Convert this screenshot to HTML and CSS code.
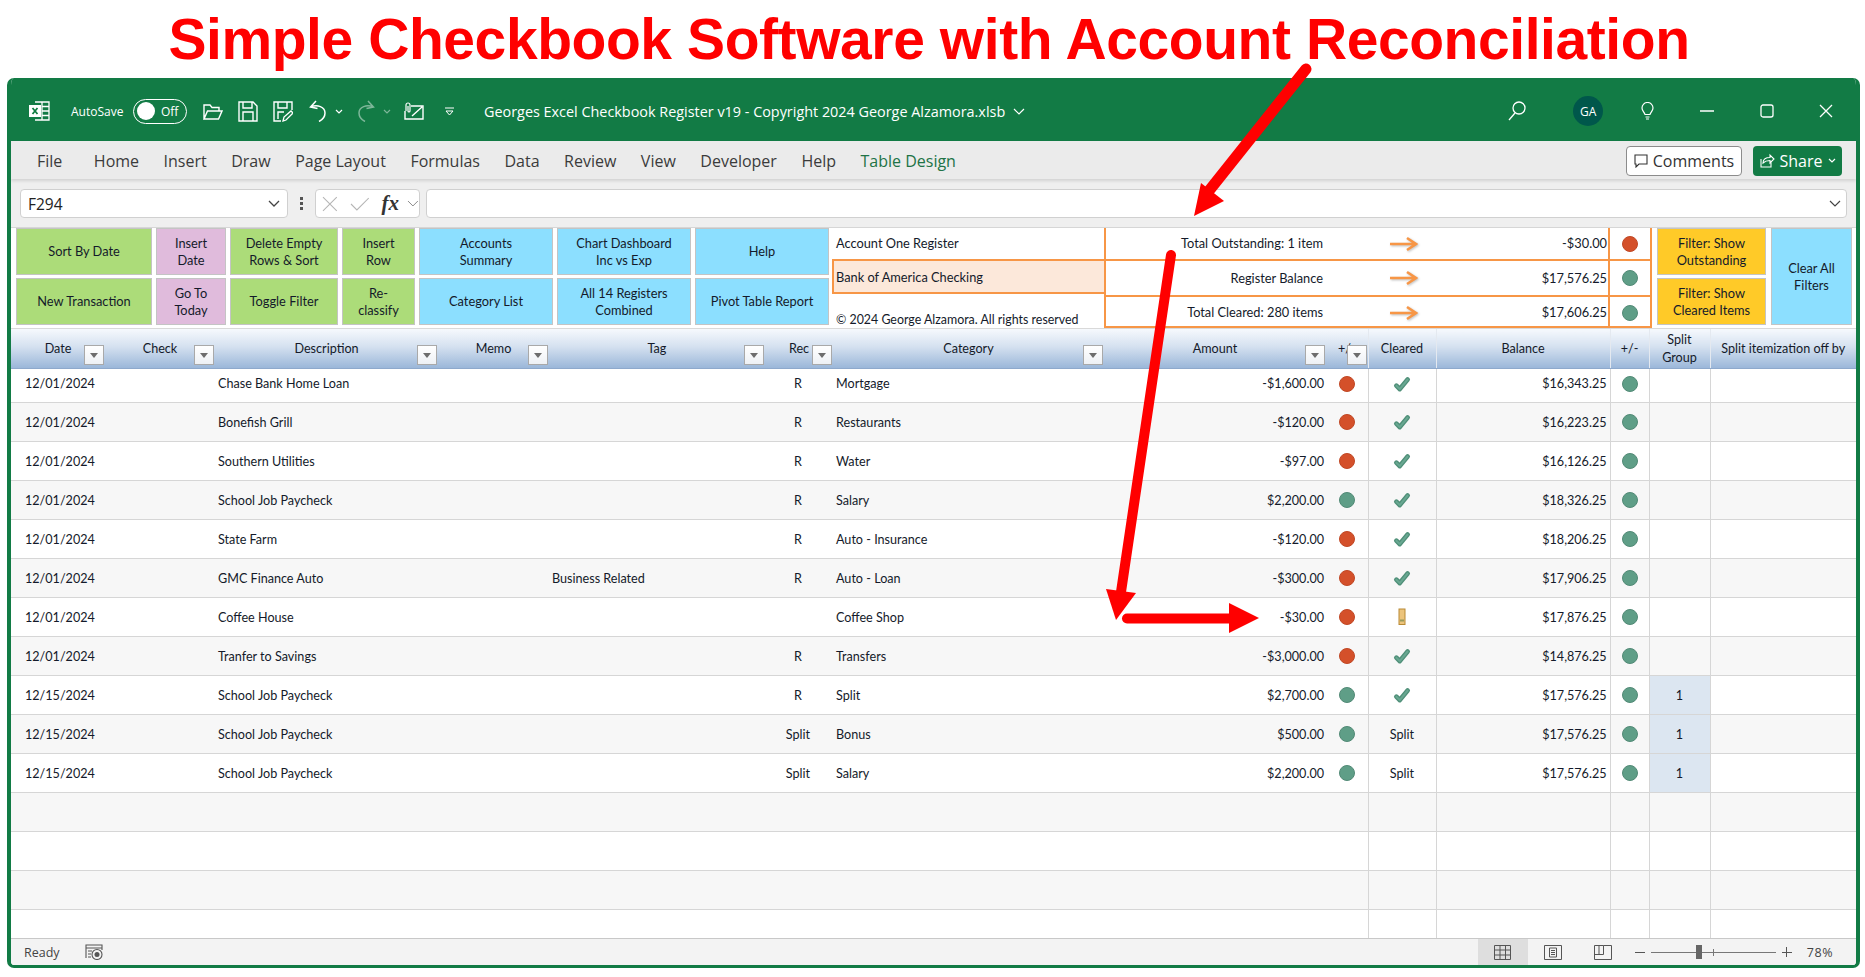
FILE: index.html
```html
<!DOCTYPE html>
<html lang="en">
<head>
  <meta charset="UTF-8">
  <title>Simple Checkbook Software with Account Reconciliation</title>
  <link rel="stylesheet" href="styles.css">
</head>
<body>

  <svg class="defs" width="0" height="0">
    <symbol id="check" viewBox="0 0 16 16">
      <path d="M3 9.500L6 12.500L13 4" fill="none" stroke="#4f8f78" stroke-width="4.200" stroke-linecap="round" stroke-linejoin="round"/>
      <path d="M3 9.500L6 12.500L13 4" fill="none" stroke="#68a791" stroke-width="1.800" stroke-linecap="round" stroke-linejoin="round"/>
    </symbol>
    <symbol id="warn" viewBox="0 0 16 18">
      <rect x="5" y="1" width="6" height="15.500" fill="#ecc47c" stroke="#b98a35" stroke-width="1"/>
      <rect x="6" y="11.500" width="4" height="2" fill="#9a9a5a"/>
    </symbol>
    <symbol id="orange-arrow" viewBox="0 0 29 16">
      <path d="M1 8h26M18 2l9 6-9 6" fill="none" stroke="#f79646" stroke-width="2.600"/>
    </symbol>
  </svg>

  <h1 class="headline">Simple Checkbook Software with Account Reconciliation</h1>

  <div class="window">
    <header class="titlebar">
      <svg class="ico excel" viewBox="0 0 21 20" width="21" height="20">
        <path d="M6 1h14v18H6M13 1v18M13 5.500h7M13 10h7M13 14.500h7" fill="none" stroke="#fff" stroke-width="1.300"/>
        <rect y="4" width="12" height="12" fill="#fff"/>
        <path d="M3.500 7l5 6M8.500 7l-5 6" stroke="#107c41" stroke-width="1.800"/>
      </svg>
      <span class="autosave">AutoSave</span>
      <span class="toggle"><i></i>Off</span>
      <svg class="ico folder" viewBox="0 0 20 17" width="20" height="17">
        <path d="M1 16V2h6l2 2.500h7V8M1 16l3.500-8H19l-3.500 8z" fill="none" stroke="#fff" stroke-width="1.400"/>
      </svg>
      <svg class="ico save" viewBox="0 0 20 21" width="20" height="21">
        <path d="M1 1h14l4 4v15H1zM5 1v6h9V1M5 20v-9h10v9" fill="none" stroke="#fff" stroke-width="1.400"/>
      </svg>
      <svg class="ico saveas" viewBox="0 0 20 21" width="20" height="21">
        <path d="M8 20H1V1h18v8M5 1v6h9V1M5 18v-7h6" fill="none" stroke="#fff" stroke-width="1.400"/>
        <path d="M10 20l1-4 7-6 2 2-7 7z" fill="none" stroke="#fff" stroke-width="1.300"/>
      </svg>
      <svg class="ico undo" viewBox="0 0 18 22" width="18" height="22">
        <path d="M7 1L1.500 7l7 1.500M1.500 7c7-3 14.500 0 14.500 6 0 4-3 7-6 8.500" fill="none" stroke="#fff" stroke-width="1.500"/>
      </svg>
      <svg class="chev-sm" viewBox="0 0 8 5" width="8" height="5"><path d="M1 1l3 3 3-3" fill="none" stroke="#fff" stroke-width="1.200"/></svg>
      <svg class="ico redo" viewBox="0 0 18 22" width="18" height="22">
        <path d="M11 1l5.500 6-7 1.500M16.500 7c-7-3-14.500 0-14.500 6 0 4 3 7 6 8.500" fill="none" stroke="#fff" stroke-width="1.500"/>
      </svg>
      <svg class="chev-sm dim" viewBox="0 0 8 5" width="8" height="5"><path d="M1 1l3 3 3-3" fill="none" stroke="#fff" stroke-width="1.200"/></svg>
      <svg class="ico mail" viewBox="0 0 20 18" width="20" height="18">
        <path d="M7 4h12v13H1V9M8 14l10-9" fill="none" stroke="#fff" stroke-width="1.400"/>
        <path d="M2 9V3a2 2 0 0 1 4 0v6a1 1 0 0 1-2 0V4" fill="none" stroke="#fff" stroke-width="1.200"/>
      </svg>
      <svg class="ico customize" viewBox="0 0 9 9" width="9" height="9">
        <path d="M0 1h9" stroke="#fff" stroke-width="1.100"/><path d="M1 4l3.500 4L8 4z" fill="none" stroke="#fff"/>
      </svg>
      <span class="doc-name">Georges Excel Checkbook Register v19 - Copyright 2024 George Alzamora.xlsb</span>
      <svg class="doc-chev" viewBox="0 0 12 7" width="12" height="7"><path d="M1 1l5 5 5-5" fill="none" stroke="#fff" stroke-width="1.200"/></svg>

      <div class="win-controls">
        <span class="slot search-slot">
          <svg viewBox="0 0 18 20" width="18" height="20"><circle cx="11" cy="7" r="6" fill="none" stroke="#fff" stroke-width="1.300"/><path d="M7 12l-6 7" stroke="#fff" stroke-width="1.300"/></svg>
        </span>
        <span class="slot"><span class="avatar">GA</span></span>
        <span class="slot">
          <svg viewBox="0 0 13 18" width="13" height="18"><path d="M4 12.500C3.500 10 1 9 1 6a5.500 5.500 0 0 1 11 0c0 3-2.500 4-3 6.500zM4.500 15h4M5 17h3" fill="none" stroke="#fff" stroke-width="1.200"/></svg>
        </span>
        <span class="slot">
          <svg viewBox="0 0 14 2" width="14" height="2"><path d="M0 1h14" stroke="#fff" stroke-width="1.400"/></svg>
        </span>
        <span class="slot">
          <svg viewBox="0 0 14 14" width="14" height="14"><rect x="1" y="1" width="12" height="12" rx="2" fill="none" stroke="#fff" stroke-width="1.300"/></svg>
        </span>
        <span class="slot">
          <svg viewBox="0 0 14 14" width="14" height="14"><path d="M1 1l12 12M13 1L1 13" stroke="#fff" stroke-width="1.300"/></svg>
        </span>
      </div>
    </header>

    <nav class="tabs">
      <a class="file">File</a>
      <a>Home</a>
      <a>Insert</a>
      <a>Draw</a>
      <a>Page Layout</a>
      <a>Formulas</a>
      <a>Data</a>
      <a>Review</a>
      <a>View</a>
      <a>Developer</a>
      <a>Help</a>
      <a class="active">Table Design</a>
      <div class="tab-actions">
        <button class="comments">
          <svg viewBox="0 0 14 14" width="14" height="14"><path d="M1 1h12v9H5l-3 3v-3H1z" fill="none" stroke="#333" stroke-width="1.100"/></svg>
          Comments
        </button>
        <button class="share">
          <svg viewBox="0 0 15 15" width="15" height="15"><path d="M1 6v8h10V9M3 10c0-4 3-5.500 7-5.500V2l4 4-4 4V7.500C7 7.500 5 8 3 10z" fill="none" stroke="#fff" stroke-width="1.100"/></svg>
          Share
          <svg viewBox="0 0 8 5" width="8" height="5"><path d="M1 1l3 3 3-3" fill="none" stroke="#fff" stroke-width="1.200"/></svg>
        </button>
      </div>
    </nav>

    <div class="formula-bar">
      <div class="name-box">F294
        <svg viewBox="0 0 12 7" width="12" height="7"><path d="M1 1l5 5 5-5" fill="none" stroke="#444" stroke-width="1.300"/></svg>
      </div>
      <span class="kebab"><i></i><i></i><i></i></span>
      <div class="fx-box">
        <svg viewBox="0 0 16 16" width="16" height="16"><path d="M1 1l14 14M15 1L1 15" stroke="#b5b5b5" stroke-width="1.100"/></svg>
        <svg viewBox="0 0 20 14" width="20" height="14"><path d="M1 7l6 6L19 1" fill="none" stroke="#b5b5b5" stroke-width="1.100"/></svg>
        <span class="fx">fx</span>
        <svg viewBox="0 0 12 7" width="12" height="7"><path d="M1 1l5 5 5-5" fill="none" stroke="#888" stroke-width="1"/></svg>
      </div>
      <div class="formula-input">
        <svg viewBox="0 0 12 7" width="12" height="7"><path d="M1 1l5 5 5-5" fill="none" stroke="#444" stroke-width="1.200"/></svg>
      </div>
    </div>

    <section class="toolbar">
      <div class="btn-grid">
        <div class="btn green">Sort By Date</div>
        <div class="btn pink">Insert<br>Date</div>
        <div class="btn green">Delete Empty<br>Rows &amp; Sort</div>
        <div class="btn green">Insert<br>Row</div>
        <div class="btn blue">Accounts<br>Summary</div>
        <div class="btn blue">Chart Dashboard<br>Inc vs Exp</div>
        <div class="btn blue">Help</div>
        <div class="btn green">New Transaction</div>
        <div class="btn pink">Go To<br>Today</div>
        <div class="btn green">Toggle Filter</div>
        <div class="btn green">Re-<br>classify</div>
        <div class="btn blue">Category List</div>
        <div class="btn blue">All 14 Registers<br>Combined</div>
        <div class="btn blue">Pivot Table Report</div>
      </div>

      <div class="account">
        <div class="acc-name">Account One Register</div>
        <div class="acc-bank">Bank of America Checking</div>
        <div class="acc-copy">© 2024 George Alzamora. All rights reserved</div>
      </div>

      <div class="summary">
        <div class="sum-row r1">
          <span class="sum-label">Total Outstanding: 1 item</span>
          <svg class="sum-arrow"><use href="#orange-arrow"/></svg>
          <span class="sum-value">-$30.00</span>
          <span class="sum-dot"><i class="dot red"></i></span>
        </div>
        <div class="sum-row r2">
          <span class="sum-label">Register Balance</span>
          <svg class="sum-arrow"><use href="#orange-arrow"/></svg>
          <span class="sum-value">$17,576.25</span>
          <span class="sum-dot"><i class="dot green"></i></span>
        </div>
        <div class="sum-row r3">
          <span class="sum-label">Total Cleared: 280 items</span>
          <svg class="sum-arrow"><use href="#orange-arrow"/></svg>
          <span class="sum-value">$17,606.25</span>
          <span class="sum-dot"><i class="dot green"></i></span>
        </div>
      </div>

      <div class="filter-col">
        <div class="btn yellow">Filter: Show<br>Outstanding</div>
        <div class="btn yellow">Filter: Show<br>Cleared Items</div>
      </div>
      <div class="btn blue clear-all">Clear All<br>Filters</div>
    </section>

    <div class="sheet">
      <table class="register">
        <colgroup>
          <col class="c-date"><col class="c-check"><col class="c-desc"><col class="c-memo"><col class="c-tag">
          <col class="c-rec"><col class="c-cat"><col class="c-amt"><col class="c-flag"><col class="c-clr">
          <col class="c-bal"><col class="c-pm"><col class="c-grp"><col class="c-off">
        </colgroup>
        <thead>
          <tr>
            <th>Date<b class="fl"></b></th>
            <th>Check<b class="fl"></b></th>
            <th>Description<b class="fl"></b></th>
            <th>Memo<b class="fl"></b></th>
            <th>Tag<b class="fl"></b></th>
            <th>Rec<b class="fl"></b></th>
            <th>Category<b class="fl"></b></th>
            <th>Amount<b class="fl"></b></th>
            <th>+/-<b class="fl"></b></th>
            <th class="sep">Cleared</th>
            <th class="sep">Balance</th>
            <th class="sep">+/-</th>
            <th class="sep">Split<br>Group</th>
            <th class="sep">Split itemization off by</th>
          </tr>
        </thead>
        <tbody>
          <tr><td>12/01/2024</td><td></td><td>Chase Bank Home Loan</td><td></td><td></td><td class="mid">R</td><td>Mortgage</td><td class="num">-$1,600.00</td><td class="mid"><i class="dot red"></i></td><td class="sep mid"><svg class="chk"><use href="#check"/></svg></td><td class="sep num">$16,343.25</td><td class="sep mid"><i class="dot green"></i></td><td class="sep"></td><td class="sep"></td></tr>
          <tr><td>12/01/2024</td><td></td><td>Bonefish Grill</td><td></td><td></td><td class="mid">R</td><td>Restaurants</td><td class="num">-$120.00</td><td class="mid"><i class="dot red"></i></td><td class="sep mid"><svg class="chk"><use href="#check"/></svg></td><td class="sep num">$16,223.25</td><td class="sep mid"><i class="dot green"></i></td><td class="sep"></td><td class="sep"></td></tr>
          <tr><td>12/01/2024</td><td></td><td>Southern Utilities</td><td></td><td></td><td class="mid">R</td><td>Water</td><td class="num">-$97.00</td><td class="mid"><i class="dot red"></i></td><td class="sep mid"><svg class="chk"><use href="#check"/></svg></td><td class="sep num">$16,126.25</td><td class="sep mid"><i class="dot green"></i></td><td class="sep"></td><td class="sep"></td></tr>
          <tr><td>12/01/2024</td><td></td><td>School Job Paycheck</td><td></td><td></td><td class="mid">R</td><td>Salary</td><td class="num">$2,200.00</td><td class="mid"><i class="dot green"></i></td><td class="sep mid"><svg class="chk"><use href="#check"/></svg></td><td class="sep num">$18,326.25</td><td class="sep mid"><i class="dot green"></i></td><td class="sep"></td><td class="sep"></td></tr>
          <tr><td>12/01/2024</td><td></td><td>State Farm</td><td></td><td></td><td class="mid">R</td><td>Auto - Insurance</td><td class="num">-$120.00</td><td class="mid"><i class="dot red"></i></td><td class="sep mid"><svg class="chk"><use href="#check"/></svg></td><td class="sep num">$18,206.25</td><td class="sep mid"><i class="dot green"></i></td><td class="sep"></td><td class="sep"></td></tr>
          <tr><td>12/01/2024</td><td></td><td>GMC Finance Auto</td><td></td><td>Business Related</td><td class="mid">R</td><td>Auto - Loan</td><td class="num">-$300.00</td><td class="mid"><i class="dot red"></i></td><td class="sep mid"><svg class="chk"><use href="#check"/></svg></td><td class="sep num">$17,906.25</td><td class="sep mid"><i class="dot green"></i></td><td class="sep"></td><td class="sep"></td></tr>
          <tr><td>12/01/2024</td><td></td><td>Coffee House</td><td></td><td></td><td class="mid"></td><td>Coffee Shop</td><td class="num">-$30.00</td><td class="mid"><i class="dot red"></i></td><td class="sep mid"><svg class="chk"><use href="#warn"/></svg></td><td class="sep num">$17,876.25</td><td class="sep mid"><i class="dot green"></i></td><td class="sep"></td><td class="sep"></td></tr>
          <tr><td>12/01/2024</td><td></td><td>Tranfer to Savings</td><td></td><td></td><td class="mid">R</td><td>Transfers</td><td class="num">-$3,000.00</td><td class="mid"><i class="dot red"></i></td><td class="sep mid"><svg class="chk"><use href="#check"/></svg></td><td class="sep num">$14,876.25</td><td class="sep mid"><i class="dot green"></i></td><td class="sep"></td><td class="sep"></td></tr>
          <tr><td>12/15/2024</td><td></td><td>School Job Paycheck</td><td></td><td></td><td class="mid">R</td><td>Split</td><td class="num">$2,700.00</td><td class="mid"><i class="dot green"></i></td><td class="sep mid"><svg class="chk"><use href="#check"/></svg></td><td class="sep num">$17,576.25</td><td class="sep mid"><i class="dot green"></i></td><td class="sep mid grp">1</td><td class="sep"></td></tr>
          <tr><td>12/15/2024</td><td></td><td>School Job Paycheck</td><td></td><td></td><td class="mid">Split</td><td>Bonus</td><td class="num">$500.00</td><td class="mid"><i class="dot green"></i></td><td class="sep mid">Split</td><td class="sep num">$17,576.25</td><td class="sep mid"><i class="dot green"></i></td><td class="sep mid grp">1</td><td class="sep"></td></tr>
          <tr><td>12/15/2024</td><td></td><td>School Job Paycheck</td><td></td><td></td><td class="mid">Split</td><td>Salary</td><td class="num">$2,200.00</td><td class="mid"><i class="dot green"></i></td><td class="sep mid">Split</td><td class="sep num">$17,576.25</td><td class="sep mid"><i class="dot green"></i></td><td class="sep mid grp">1</td><td class="sep"></td></tr>
          <tr><td colspan="9"></td><td class="sep"></td><td class="sep"></td><td class="sep"></td><td class="sep"></td><td class="sep"></td></tr>
          <tr><td colspan="9"></td><td class="sep"></td><td class="sep"></td><td class="sep"></td><td class="sep"></td><td class="sep"></td></tr>
          <tr><td colspan="9"></td><td class="sep"></td><td class="sep"></td><td class="sep"></td><td class="sep"></td><td class="sep"></td></tr>
          <tr><td colspan="9"></td><td class="sep"></td><td class="sep"></td><td class="sep"></td><td class="sep"></td><td class="sep"></td></tr>
        </tbody>
      </table>
    </div>

    <footer class="statusbar">
      <span class="ready">Ready</span>
      <svg class="macro" viewBox="0 0 18 16" width="18" height="16">
        <path d="M1 14V1h16v5M1 4h16M3 7h4M3 10h3M3 13h3" fill="none" stroke="#555" stroke-width="1.100"/>
        <circle cx="12" cy="10.500" r="5" fill="#f3f3f3" stroke="#555" stroke-width="1.100"/><circle cx="12" cy="10.500" r="2.500" fill="#555"/>
      </svg>
      <div class="view-btns">
        <span class="view on">
          <svg viewBox="0 0 17 15" width="17" height="15"><path d="M.5.5h16v14H.5zM.5 5h16M.5 10h16M6 .5v14M11.500.5v14" fill="none" stroke="#555"/></svg>
        </span>
        <span class="view">
          <svg viewBox="0 0 18 15" width="18" height="15"><path d="M.5.5h17v14H.5z" fill="none" stroke="#555"/><path d="M5.500 3h7v9h-7zM7 5.500h4M7 7.500h4M7 9.500h4" fill="none" stroke="#555"/></svg>
        </span>
        <span class="view">
          <svg viewBox="0 0 18 15" width="18" height="15"><path d="M.5 .5v14h17V.5h-8v9H.5M5 .5v9M.5 .5h9" fill="none" stroke="#555"/></svg>
        </span>
      </div>
      <div class="zoomer">
        <span class="zoom-minus"></span>
        <div class="slider"><i class="tick"></i><i class="thumb"></i></div>
        <span class="zoom-plus"></span>
        <span class="zoom-val">78%</span>
      </div>
    </footer>
  </div>

  <!-- red callouts drawn over the screenshot -->
  <svg class="callouts" viewBox="0 0 1865 977" width="1865" height="977">
    <path d="M1306 69L1208 192" stroke="#f00" stroke-width="11" stroke-linecap="round"/>
    <path d="M1194 216L1201 183L1224 201Z" fill="#f00"/>
    <path d="M1171 255L1121 592" stroke="#f00" stroke-width="10" stroke-linecap="round"/>
    <path d="M1116 620L1106 589L1136 593Z" fill="#f00"/>
    <path d="M1127 618.500H1232" stroke="#f00" stroke-width="10" stroke-linecap="round"/>
    <path d="M1259 618L1229 603V633Z" fill="#f00"/>
  </svg>

</body>
</html>
```

FILE: styles.css
```css
html, body {
  margin: 0;
  padding: 0;
  height: 977px;
  overflow: hidden;
  background: #fff;
}

body {
  position: relative;
  font-family: "Lato", "Liberation Sans", sans-serif;
}

.defs {
  position: absolute;
}

.headline {
  margin: 0;
  height: 78px;
  box-sizing: border-box;
  padding-top: 7px;
  font: bold 57px/64px "Liberation Sans", sans-serif;
  letter-spacing: -0.42px;
  color: #f00;
  text-align: center;
  white-space: nowrap;
  width: 1858px;
}

.window {
  margin-left: 7px;
  width: 1853px;
  height: 890px;
  box-sizing: border-box;
  border: solid #127b45;
  border-width: 0 4px 3px 4px;
  border-radius: 7px;
  display: flex;
  flex-direction: column;
  overflow: hidden;
  background: #fff;
}

/* title bar */
.titlebar {
  height: 63px;
  flex: none;
  box-sizing: border-box;
  background: #127b45;
  display: flex;
  align-items: center;
  color: #fff;
  font: 14.4px "Open Sans", sans-serif;
  padding: 3px 0 0 18px;
}

.autosave {
  margin-left: 21px;
  width: 54px;
  font-size: 12px;
  white-space: nowrap;
}

.toggle {
  margin-left: 8px;
  width: 54px;
  height: 25px;
  box-sizing: border-box;
  border: 1px solid #fff;
  border-radius: 13px;
  display: flex;
  align-items: center;
  font-size: 12px;
  padding-left: 3px;
}

.toggle i {
  width: 18px;
  height: 18px;
  border-radius: 50%;
  background: #fff;
  margin-right: 6px;
}

.folder { margin-left: 16px; }
.save { margin-left: 15px; }
.saveas { margin-left: 15px; }
.undo { margin-left: 16px; }
.chev-sm { margin-left: 8px; }
.redo { margin-left: 14px; opacity: 0.45; }
.chev-sm.dim { opacity: 0.45; }
.mail { margin-left: 13px; }
.customize { margin-left: 21px; }

.doc-name {
  margin-left: 30px;
  white-space: nowrap;
}

.doc-chev {
  margin-left: 8px;
}

.win-controls {
  margin-left: auto;
  display: flex;
  align-items: center;
}

.slot {
  width: 59.5px;
  display: flex;
  justify-content: center;
  align-items: center;
}

.search-slot {
  margin-right: 12px;
}

.avatar {
  width: 30px;
  height: 30px;
  border-radius: 50%;
  background: #00574b;
  font-size: 12px;
  display: flex;
  align-items: center;
  justify-content: center;
}

/* ribbon tabs */
.tabs {
  height: 38px;
  flex: none;
  box-sizing: border-box;
  padding: 1px 0 0 26px;
  background: #ebebeb;
  display: flex;
  align-items: center;
  gap: 24.5px;
  font: 16px "Open Sans", sans-serif;
  color: #3b3b3b;
  box-shadow: 0 2px 3px rgba(0, 0, 0, 0.12);
  position: relative;
}

.tabs .file {
  margin-right: 7px;
}

.tabs .active {
  color: #217346;
}

.tab-actions {
  margin-left: auto;
  margin-right: 14px;
  display: flex;
  gap: 11px;
}

.tab-actions button {
  height: 30px;
  border-radius: 4px;
  font: 16px "Open Sans", sans-serif;
  display: flex;
  align-items: center;
  justify-content: center;
  gap: 5px;
  padding: 0;
}

.comments {
  width: 116px;
  background: #fff;
  border: 1px solid #8c8c8c;
  color: #333;
}

.share {
  width: 89px;
  background: #127b45;
  border: none;
  color: #fff;
}

/* formula bar */
.formula-bar {
  height: 49px;
  flex: none;
  box-sizing: border-box;
  background: #efefef;
  border-bottom: 1px solid #d6d6d6;
  padding: 10px 9px 9px;
  display: flex;
}

.name-box, .fx-box, .formula-input {
  background: #fff;
  border: 1px solid #d0d0d0;
  border-radius: 4px;
  box-sizing: border-box;
  display: flex;
  align-items: center;
}

.name-box {
  width: 268px;
  padding: 0 7px;
  justify-content: space-between;
  font: 15.5px "Open Sans", sans-serif;
  color: #222;
}

.kebab {
  width: 27px;
  display: flex;
  flex-direction: column;
  align-items: center;
  justify-content: center;
  gap: 2px;
}

.kebab i {
  width: 3px;
  height: 3px;
  background: #555;
}

.fx-box {
  width: 105px;
  padding: 0 0 0 6px;
  gap: 12px;
}

.fx {
  width: 19px;
  margin-right: -5px;
  font: italic bold 21px "Liberation Serif", serif;
  color: #333;
}

.formula-input {
  flex: 1;
  margin-left: 6px;
  justify-content: flex-end;
  padding-right: 5px;
}

/* macro buttons and summary block */
.toolbar {
  height: 101px;
  flex: none;
  box-sizing: border-box;
  background: #fff;
  display: flex;
  border-bottom: 1px solid #d9d9d9;
  font-size: 12.8px;
  color: #141a2a;
}

.btn-grid {
  margin-left: 5px;
  display: grid;
  grid-template-columns: 136px 70px 108px 73px 134px 134px 134px;
  grid-template-rows: 47px 47px;
  gap: 3px 4px;
}

.btn {
  box-sizing: border-box;
  border: 1px solid #c4c4c4;
  display: flex;
  align-items: center;
  justify-content: center;
  text-align: center;
  line-height: 17px;
}

.green { background: #acdc79; }
.pink { background: #e0bbdc; }
.blue { background: #8cdfff; }
.yellow { background: #ffca28; }

.account {
  width: 275px;
  display: flex;
  flex-direction: column;
}

.acc-name {
  height: 31px;
  line-height: 31px;
  padding-left: 7px;
}

.acc-bank {
  height: 35px;
  box-sizing: border-box;
  margin-left: 3px;
  padding-left: 2px;
  line-height: 33px;
  background: #fce8da;
  border: solid #f79646;
  border-width: 2px 0 2px 2px;
}

.acc-copy {
  padding: 18px 0 0 7px;
  white-space: nowrap;
  font-size: 12.4px;
}

.summary {
  width: 548px;
  height: 100px;
  box-sizing: border-box;
  border: solid #f79646;
  border-width: 0 2px 2px 2px;
}

.sum-row {
  display: flex;
  align-items: center;
  white-space: nowrap;
}

.r1 { height: 31px; }
.r2 { height: 34px; border-top: 2px solid #f79646; border-bottom: 2px solid #f79646; }
.r3 { height: 31px; }

.r1 .sum-label, .r1 .sum-value,
.r3 .sum-label, .r3 .sum-value {
  padding-bottom: 2px;
}

.sum-label {
  width: 217px;
  text-align: right;
}

.sum-arrow {
  width: 29px;
  height: 16px;
  margin-left: 66px;
  filter: drop-shadow(1px 1px 1px rgba(0, 0, 0, 0.25));
}

.sum-value {
  flex: 1;
  text-align: right;
  padding-right: 1px;
}

.sum-dot {
  width: 42px;
  height: 100%;
  box-sizing: border-box;
  border-left: 2px solid #f79646;
  display: flex;
  align-items: center;
  justify-content: center;
}

.filter-col {
  margin-left: 5px;
  width: 109px;
  display: flex;
  flex-direction: column;
  gap: 3px;
}

.filter-col .btn {
  height: 47px;
}

.clear-all {
  margin-left: 5px;
  width: 81px;
  height: 97px;
}

.dot {
  display: inline-block;
  flex: none;
  width: 16px;
  height: 16px;
  border-radius: 50%;
  box-sizing: border-box;
  vertical-align: middle;
}

.dot.red {
  background: #d4502a;
  border: 1px solid #c04825;
}

.dot.green {
  background: #5f9e87;
  border: 1px solid #528a76;
}

/* register table */
.sheet {
  flex: 1;
  overflow: hidden;
  min-height: 0;
}

.register {
  width: 1845px;
  table-layout: fixed;
  border-collapse: collapse;
  font-size: 12.6px;
  color: #141a2a;
}

.c-date { width: 94px; }
.c-check { width: 110px; }
.c-desc { width: 223px; }
.c-memo { width: 111px; }
.c-tag { width: 216px; }
.c-rec { width: 68px; }
.c-cat { width: 271px; }
.c-amt { width: 222px; }
.c-flag { width: 42px; }
.c-clr { width: 68px; }
.c-bal { width: 174px; }
.c-pm { width: 39px; }
.c-grp { width: 61px; }
.c-off { width: 146px; }

.register th {
  height: 39px;
  padding: 0;
  position: relative;
  font-weight: normal;
  line-height: 18px;
  text-align: center;
  background: linear-gradient(#f6f9fd, #d5e1f0 45%, #9bb7d9);
  border-bottom: 1px solid #8ea9cc;
  white-space: nowrap;
}

.register th.sep {
  border-left: 1px solid #e4e9f0;
}

.fl {
  position: absolute;
  right: 1px;
  bottom: 3px;
  width: 20px;
  height: 20px;
  box-sizing: border-box;
  background: linear-gradient(#fff, #eef1f5);
  border: 1px solid #a9a9a9;
}

.fl::after {
  content: "";
  position: absolute;
  left: 5px;
  top: 7px;
  border: 4px solid transparent;
  border-top: 5px solid #6d6d6d;
  border-bottom: 0;
}

.register td {
  height: 39px;
  box-sizing: border-box;
  padding: 0;
  border-bottom: 1px solid #d6d6d6;
  white-space: nowrap;
}

.register tbody tr:first-child td {
  height: 34px;
  padding-bottom: 4px;
}

.register tbody tr:nth-child(even) td {
  background: #f7f7f7;
}

.register td:first-child {
  padding-left: 14px;
}

.register td:nth-child(3) {
  padding-left: 3px;
}

.register td:nth-child(5) {
  padding-left: 3px;
}

.register td:nth-child(6) {
  padding-right: 2px;
}

.register td:nth-child(7) {
  padding-left: 3px;
}

.register td.sep {
  border-left: 1px solid #d6d6d6;
}

.register td.num {
  text-align: right;
  padding-right: 3px;
}

.register td:nth-child(8).num {
  padding-right: 2px;
}

.register td.mid {
  text-align: center;
}

.register tbody tr td.grp {
  background: #dce6f1;
}

.chk {
  width: 18px;
  height: 18px;
  vertical-align: middle;
}

/* status bar */
.statusbar {
  height: 27px;
  flex: none;
  box-sizing: border-box;
  background: #f3f3f3;
  border-top: 1px solid #c8c8c8;
  display: flex;
  align-items: center;
  font: 12.5px "Open Sans", sans-serif;
  color: #444;
  padding-left: 13px;
}

.ready {
  width: 61px;
}

.view-btns {
  margin-left: auto;
  display: flex;
  height: 100%;
}

.view {
  width: 50px;
  display: flex;
  align-items: center;
  justify-content: center;
}

.view.on {
  background: #dedede;
}

.zoomer {
  margin-left: 7px;
  margin-right: 23px;
  display: flex;
  align-items: center;
}

.zoom-minus {
  width: 10px;
  height: 1px;
  background: #555;
}

.zoom-plus {
  width: 10px;
  height: 1px;
  background: #555;
  position: relative;
  margin-left: 6px;
}

.zoom-plus::after {
  content: "";
  position: absolute;
  left: 4.500px;
  top: -5px;
  width: 1px;
  height: 10px;
  background: #555;
}

.slider {
  position: relative;
  width: 125px;
  height: 1px;
  background: #777;
  margin-left: 6px;
}

.slider .tick {
  position: absolute;
  left: 62px;
  top: -3px;
  width: 1px;
  height: 7px;
  background: #777;
}

.slider .thumb {
  position: absolute;
  left: 45px;
  top: -7px;
  width: 6px;
  height: 14px;
  background: #666;
}

.zoom-val {
  margin-left: 15px;
  letter-spacing: 0.5px;
}

/* red callouts */
.callouts {
  position: absolute;
  left: 0;
  top: 0;
  pointer-events: none;
}
```
